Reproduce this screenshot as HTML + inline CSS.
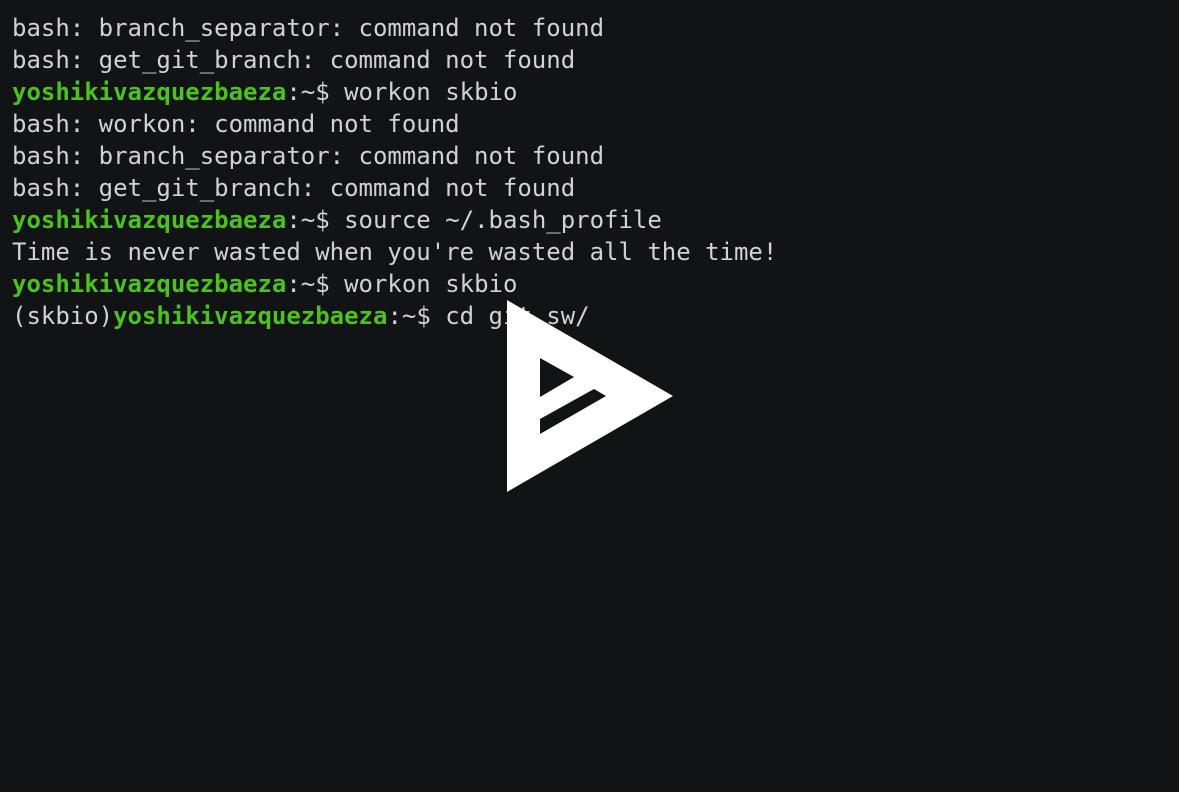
<!DOCTYPE html>
<html><head><meta charset="utf-8"><style>
html,body{margin:0;padding:0;background:#121315;width:1179px;height:792px;overflow:hidden}
pre{margin:0;padding:12px 0 0 12px;font-family:"DejaVu Sans Mono","Liberation Mono",monospace;font-size:24px;line-height:32px;color:#d2d2d2;letter-spacing:-0.01px}
b{color:#4cc21c;font-weight:bold}
svg{position:absolute;left:0;top:0}
</style></head><body>
<pre>bash: branch_separator: command not found
bash: get_git_branch: command not found
<b>yoshikivazquezbaeza</b>:~$ workon skbio
bash: workon: command not found
bash: branch_separator: command not found
bash: get_git_branch: command not found
<b>yoshikivazquezbaeza</b>:~$ source ~/.bash_profile
Time is never wasted when you're wasted all the time!
<b>yoshikivazquezbaeza</b>:~$ workon skbio
(skbio)<b>yoshikivazquezbaeza</b>:~$ cd git sw/</pre>
<svg width="1179" height="792">
<polygon points="507,300 673,396 507,492" fill="#fff"/>
<polygon points="540,358 574,377 540,397" fill="#121315"/>
<polygon points="540,419 594,389 606,396 540,434" fill="#121315"/>
</svg>
</body></html>
